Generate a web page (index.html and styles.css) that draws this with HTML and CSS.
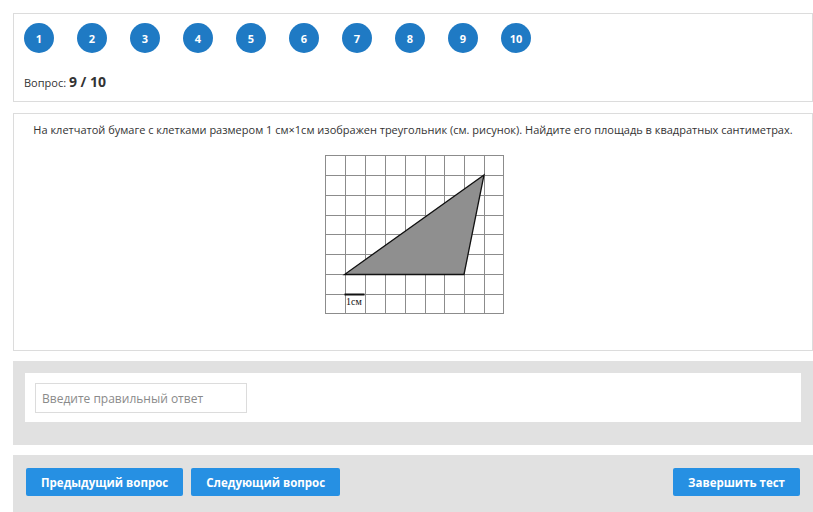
FILE: index.html
```html
<!DOCTYPE html>
<html lang="ru">
<head>
  <meta charset="UTF-8" />
  <title>Тест</title>
  <link rel="stylesheet" href="styles.css">
</head>
<body>

  <div class="panel nav">
    <div class="steps">
      <span class="step">1</span>
      <span class="step">2</span>
      <span class="step">3</span>
      <span class="step">4</span>
      <span class="step">5</span>
      <span class="step">6</span>
      <span class="step">7</span>
      <span class="step">8</span>
      <span class="step">9</span>
      <span class="step">10</span>
    </div>
    <div class="counter">Вопрос: <b>9 / 10</b></div>
  </div>

  <div class="panel question">
    <p class="question-text">На клетчатой бумаге с клетками размером 1 см×1см изображен треугольник (см. рисунок). Найдите его площадь в квадратных сантиметрах.</p>
    <div class="figure">
      <svg width="184" height="164" viewBox="0 0 184 164">
        <rect width="184" height="164" fill="#fff"/>
        <g stroke="#8c8c8c" stroke-width="1">
          <path d="M3.5 3v158M23.5 3v158M43.5 3v158M63.5 3v158M83.5 3v158M103.5 3v158M122.5 3v158M142.5 3v158M162.5 3v158M181.5 3v158"/>
          <path d="M3 3.5h179M3 23.5h179M3 43.5h179M3 63.5h179M3 82.5h179M3 102.5h179M3 122.5h179M3 142.5h179M3 161.5h179"/>
        </g>
        <polygon points="22.5,122.5 142,122.5 162,23" fill="#8f8f8f" stroke="#111" stroke-width="1.3"/>
        <path d="M22.5 142.5h20" stroke="#111" stroke-width="2"/>
        <text x="24" y="153" class="unit">1см</text>
      </svg>
    </div>
  </div>

  <div class="panel answer">
    <div class="answer-box">
      <input type="text" placeholder="Введите правильный ответ" />
    </div>
  </div>

  <div class="panel actions">
    <button>Предыдущий вопрос</button>
    <button>Следующий вопрос</button>
    <button class="finish">Завершить тест</button>
  </div>

</body>
</html>
```

FILE: styles.css
```css
:root {
  --circle: #1f7ac4;
  --button: #2690e3;
  --line: #dcdcdc;
  --grey: #e1e1e1;
  --text: #333;
}

* {
  box-sizing: border-box;
  margin: 0;
  padding: 0;
}

body {
  font-family: 'Open Sans', sans-serif;
  color: var(--text);
  background: #fff;
  padding: 13px 0 0 13px;
  width: 813px;
}

.panel {
  width: 800px;
  margin-bottom: 10px;
}

.nav {
  border: 1px solid var(--line);
  height: 89px;
  padding: 9px 9px 0 10px;
  margin-bottom: 11px;
}

.steps {
  display: flex;
  gap: 23px;
}

.step {
  width: 30px;
  height: 30px;
  border-radius: 50%;
  background: var(--circle);
  color: #fff;
  font-size: 11px;
  font-weight: bold;
  display: flex;
  align-items: center;
  justify-content: center;
}

.counter {
  margin-top: 19px;
  font-size: 11px;
  line-height: 20px;
}

.counter b {
  font-size: 14px;
}

.question {
  border: 1px solid var(--line);
  height: 238px;
  padding-top: 8px;
}

.question-text {
  font-size: 11px;
  text-align: center;
  line-height: 16px;
}

.figure {
  display: flex;
  justify-content: center;
  margin-top: 14px;
  padding-left: 2px;
}

.unit {
  font-family: 'Liberation Serif', serif;
  font-size: 10px;
  fill: #111;
}

.answer {
  background: var(--grey);
  padding: 12px;
  height: 84px;
}

.answer-box {
  background: #fff;
  padding: 10px;
  height: 49px;
}

.answer input {
  width: 212px;
  height: 30px;
  border: 1px solid var(--line);
  padding: 0 6px;
  font-family: inherit;
  font-size: 12px;
  color: var(--text);
}

.answer input::placeholder {
  color: #8a8a8a;
}

.actions {
  background: var(--grey);
  padding: 13px;
  display: flex;
  gap: 8px;
  height: 60px;
}

.actions button {
  background: var(--button);
  color: #fff;
  border: none;
  border-radius: 2px;
  height: 28px;
  padding: 0 15px;
  font-family: inherit;
  font-size: 11.5px;
  font-weight: bold;
}

.actions .finish {
  margin-left: auto;
}
```
